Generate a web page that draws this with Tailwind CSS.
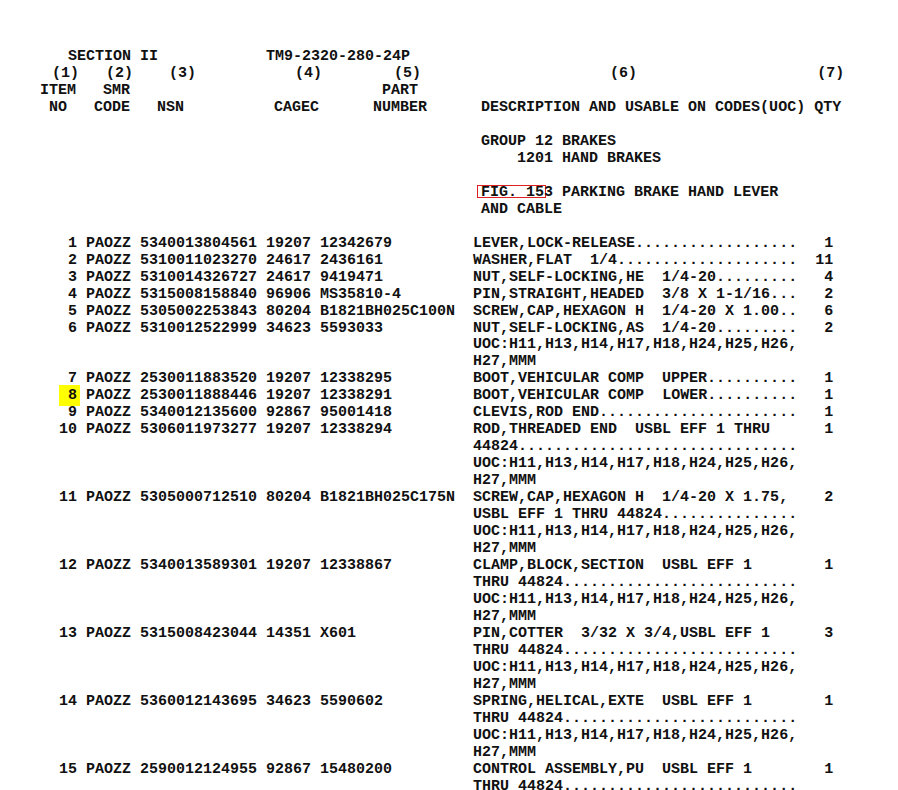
<!DOCTYPE html>
<html lang="en">
<head>
    <meta charset="UTF-8">
    <title>TM9-2320-280-24P</title>
    <script src="https://cdn.jsdelivr.net/npm/@tailwindcss/browser@4"></script>
</head>
<body class="bg-white text-[#111] h-[790px] overflow-hidden">
    <main class="pt-[49px] font-['Liberation_Mono',monospace] font-bold text-[15px] leading-[16.97px]">
        <!-- header lines do not sit on the same origin as the table -->
        <div class="whitespace-pre pl-[5px]">       SECTION II            TM9-2320-280-24P</div>
        <div class="whitespace-pre pl-[7px]">     (1)   (2)    (3)           (4)        (5)                     (6)                    (7)</div>
        <div class="whitespace-pre pl-[4px]">    ITEM   SMR                            PART</div>
        <div class="whitespace-pre pl-[4px] mb-[16.97px]">     NO   CODE   NSN          CAGEC      NUMBER      DESCRIPTION AND USABLE ON CODES(UOC) QTY</div>
        <div class="whitespace-pre pl-[4px] mb-[16.97px]">                                                     GROUP 12 BRAKES
                                                         1201 HAND BRAKES</div>
        <div class="whitespace-pre pl-[4px] mb-[16.97px]">                                                     <span class="inline-block h-[13px] leading-[16px] pl-[4px] pr-[2px] -ml-[4px] -mr-[2px] outline outline-[#e02020] -outline-offset-1">FIG. 15</span>3 PARKING BRAKE HAND LEVER
                                                     AND CABLE</div>
        <div class="whitespace-pre pl-[5px]">       1 PAOZZ 5340013804561 19207 12342679         LEVER,LOCK-RELEASE..................   1
       2 PAOZZ 5310011023270 24617 2436161          WASHER,FLAT  1/4....................  11
       3 PAOZZ 5310014326727 24617 9419471          NUT,SELF-LOCKING,HE  1/4-20.........   4
       4 PAOZZ 5315008158840 96906 MS35810-4        PIN,STRAIGHT,HEADED  3/8 X 1-1/16...   2
       5 PAOZZ 5305002253843 80204 B1821BH025C100N  SCREW,CAP,HEXAGON H  1/4-20 X 1.00..   6
       6 PAOZZ 5310012522999 34623 5593033          NUT,SELF-LOCKING,AS  1/4-20.........   2
                                                    UOC:H11,H13,H14,H17,H18,H24,H25,H26,
                                                    H27,MMM
       7 PAOZZ 2530011883520 19207 12338295         BOOT,VEHICULAR COMP  UPPER..........   1
       <span class="bg-[#ffff00] pl-[9px] pr-[3px] -ml-[9px] -mr-[3px] py-[2px]">8</span> PAOZZ 2530011888446 19207 12338291         BOOT,VEHICULAR COMP  LOWER..........   1
       9 PAOZZ 5340012135600 92867 95001418         CLEVIS,ROD END......................   1
      10 PAOZZ 5306011973277 19207 12338294         ROD,THREADED END  USBL EFF 1 THRU      1
                                                    44824...............................
                                                    UOC:H11,H13,H14,H17,H18,H24,H25,H26,
                                                    H27,MMM
      11 PAOZZ 5305000712510 80204 B1821BH025C175N  SCREW,CAP,HEXAGON H  1/4-20 X 1.75,    2
                                                    USBL EFF 1 THRU 44824...............
                                                    UOC:H11,H13,H14,H17,H18,H24,H25,H26,
                                                    H27,MMM
      12 PAOZZ 5340013589301 19207 12338867         CLAMP,BLOCK,SECTION  USBL EFF 1        1
                                                    THRU 44824..........................
                                                    UOC:H11,H13,H14,H17,H18,H24,H25,H26,
                                                    H27,MMM
      13 PAOZZ 5315008423044 14351 X601             PIN,COTTER  3/32 X 3/4,USBL EFF 1      3
                                                    THRU 44824..........................
                                                    UOC:H11,H13,H14,H17,H18,H24,H25,H26,
                                                    H27,MMM
      14 PAOZZ 5360012143695 34623 5590602          SPRING,HELICAL,EXTE  USBL EFF 1        1
                                                    THRU 44824..........................
                                                    UOC:H11,H13,H14,H17,H18,H24,H25,H26,
                                                    H27,MMM
      15 PAOZZ 2590012124955 92867 15480200         CONTROL ASSEMBLY,PU  USBL EFF 1        1
                                                    THRU 44824..........................</div>
    </main>
</body>
</html>
